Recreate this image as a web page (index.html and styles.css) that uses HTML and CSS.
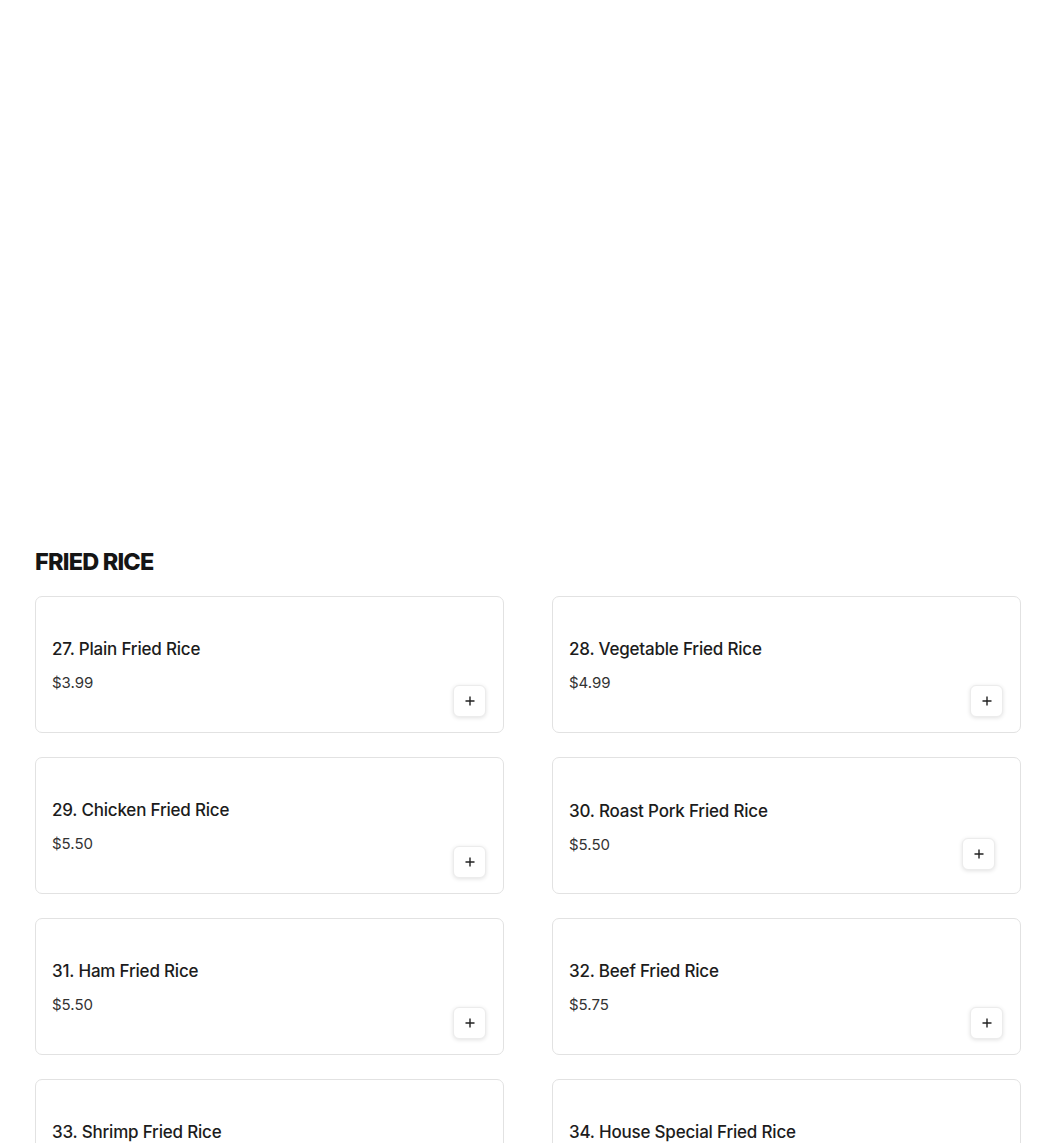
FILE: index.html
```html
<!DOCTYPE html>
<html>
<head>
<meta charset="utf-8">
<link rel="stylesheet" href="styles.css">
</head>
<body>
<main class="page">
  <section class="menu-section">
    <h2 class="section-title">FRIED RICE</h2>
    <div class="grid">
      <div class="card">
        <div class="info"><div class="name">27. Plain Fried Rice</div><div class="price">$3.99</div></div>
        <button class="add" aria-label="Add"><svg viewBox="0 0 12 12" width="12" height="12"><path d="M6 1.5v9M1.5 6h9" stroke="#222" stroke-width="1.4" fill="none"/></svg></button>
      </div>
      <div class="card">
        <div class="info"><div class="name">28. Vegetable Fried Rice</div><div class="price">$4.99</div></div>
        <button class="add" aria-label="Add"><svg viewBox="0 0 12 12" width="12" height="12"><path d="M6 1.5v9M1.5 6h9" stroke="#222" stroke-width="1.4" fill="none"/></svg></button>
      </div>
      <div class="card">
        <div class="info"><div class="name">29. Chicken Fried Rice</div><div class="price">$5.50</div></div>
        <button class="add" aria-label="Add"><svg viewBox="0 0 12 12" width="12" height="12"><path d="M6 1.5v9M1.5 6h9" stroke="#222" stroke-width="1.4" fill="none"/></svg></button>
      </div>
      <div class="card">
        <div class="info info-shift"><div class="name">30. Roast Pork Fried Rice</div><div class="price">$5.50</div></div>
        <button class="add add-shift" aria-label="Add"><svg viewBox="0 0 12 12" width="12" height="12"><path d="M6 1.5v9M1.5 6h9" stroke="#222" stroke-width="1.4" fill="none"/></svg></button>
      </div>
      <div class="card">
        <div class="info"><div class="name">31. Ham Fried Rice</div><div class="price">$5.50</div></div>
        <button class="add" aria-label="Add"><svg viewBox="0 0 12 12" width="12" height="12"><path d="M6 1.5v9M1.5 6h9" stroke="#222" stroke-width="1.4" fill="none"/></svg></button>
      </div>
      <div class="card">
        <div class="info"><div class="name">32. Beef Fried Rice</div><div class="price">$5.75</div></div>
        <button class="add" aria-label="Add"><svg viewBox="0 0 12 12" width="12" height="12"><path d="M6 1.5v9M1.5 6h9" stroke="#222" stroke-width="1.4" fill="none"/></svg></button>
      </div>
      <div class="card">
        <div class="info"><div class="name">33. Shrimp Fried Rice</div><div class="price">$5.75</div></div>
        <button class="add" aria-label="Add"><svg viewBox="0 0 12 12" width="12" height="12"><path d="M6 1.5v9M1.5 6h9" stroke="#222" stroke-width="1.4" fill="none"/></svg></button>
      </div>
      <div class="card">
        <div class="info"><div class="name">34. House Special Fried Rice</div><div class="price">$6.25</div></div>
        <button class="add" aria-label="Add"><svg viewBox="0 0 12 12" width="12" height="12"><path d="M6 1.5v9M1.5 6h9" stroke="#222" stroke-width="1.4" fill="none"/></svg></button>
      </div>
    </div>
  </section>
</main>
</body>
</html>
```

FILE: styles.css
```css
* { box-sizing: border-box; }
html, body { margin: 0; padding: 0; background: #fff; }
body {
  font-family: Inter, "Noto Sans", "Liberation Sans", sans-serif;
  color: #1e1e1e;
}
.page {
  padding: 547px 29px 40px 35px;
}
.section-title {
  margin: 0 0 19px 0;
  font-size: 23.5px;
  line-height: 30px;
  font-weight: 800;
  letter-spacing: -0.8px;
  color: #151515;
}
.grid {
  display: grid;
  grid-template-columns: 469px 469px;
  column-gap: 48px;
  row-gap: 24px;
}
.card {
  display: grid;
  grid-template-columns: 1fr auto;
  align-items: end;
  height: 137px;
  border: 1px solid #e2e2e2;
  border-radius: 7px;
  padding: 40px 17px 15px 16px;
  background: #fff;
}
.info {
  padding-bottom: 24px;
}
.name {
  font-size: 17px;
  line-height: 22px;
  font-weight: 500;
  color: #1c1c1c;
  letter-spacing: -0.2px;
}
.price {
  margin-top: 13px;
  font-size: 15px;
  line-height: 20px;
  font-weight: 400;
  color: #333;
}
.add {
  width: 33px;
  height: 32px;
  border: 1px solid #ececec;
  border-radius: 6px;
  background: #fff;
  box-shadow: 0 1px 4px rgba(0, 0, 0, 0.12);
  display: flex;
  align-items: center;
  justify-content: center;
  padding: 0;
  cursor: pointer;
}
.add svg { display: block; }
.add-shift {
  margin-right: 8px;
  margin-bottom: 8px;
}
.info-shift .name { position: relative; top: 1px; }
.info-shift .price { position: relative; top: 1px; }
```
